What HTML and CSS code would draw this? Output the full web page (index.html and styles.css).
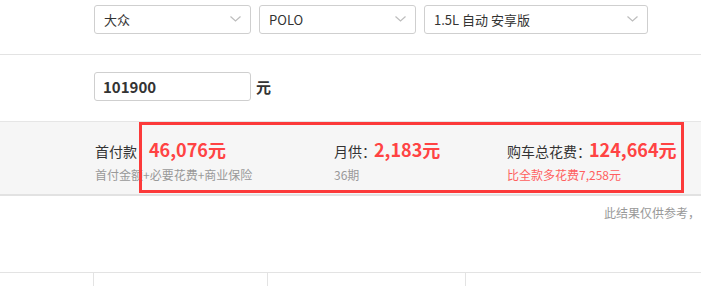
FILE: index.html
```html
<!DOCTYPE html>
<html lang="zh-CN">
<head>
    <meta charset="UTF-8">
    <meta name="viewport" content="width=device-width, initial-scale=1.0">
    <title>购车计算器</title>
    <link rel="stylesheet" href="styles.css">
</head>
<body>
    <div class="calc">
        <div class="row row-car">
            <div class="select select-brand">
                <span>大众</span>
                <svg class="arrow" width="11" height="6" viewBox="0 0 11 6"><path d="M0.5 0.5 L5.5 5 L10.5 0.5" fill="none" stroke="#bdbdbd" stroke-width="1.2"/></svg>
            </div>
            <div class="select select-model">
                <span>POLO</span>
                <svg class="arrow" width="11" height="6" viewBox="0 0 11 6"><path d="M0.5 0.5 L5.5 5 L10.5 0.5" fill="none" stroke="#bdbdbd" stroke-width="1.2"/></svg>
            </div>
            <div class="select select-trim">
                <span>1.5L 自动 安享版</span>
                <svg class="arrow" width="11" height="6" viewBox="0 0 11 6"><path d="M0.5 0.5 L5.5 5 L10.5 0.5" fill="none" stroke="#bdbdbd" stroke-width="1.2"/></svg>
            </div>
        </div>

        <div class="row row-price">
            <input class="price-input" type="text" value="101900">
            <span class="unit">元</span>
        </div>

        <div class="result">
            <div class="result-item">
                <div class="main">首付款：<b>46,076元</b></div>
                <div class="sub">首付金额+必要花费+商业保险</div>
            </div>
            <div class="result-item">
                <div class="main">月供：<b>2,183元</b></div>
                <div class="sub">36期</div>
            </div>
            <div class="result-item">
                <div class="main">购车总花费：<b>124,664元</b></div>
                <div class="sub sub-red">比全款多花费7,258元</div>
            </div>
            <div class="highlight"></div>
        </div>

        <p class="note">此结果仅供参考，</p>

        <div class="table">
            <div class="cell"></div>
            <div class="cell"></div>
            <div class="cell"></div>
            <div class="cell"></div>
        </div>
    </div>
</body>
</html>
```

FILE: styles.css
```css
* {
    margin: 0;
    padding: 0;
    box-sizing: border-box;
}

body {
    width: 701px;
    height: 286px;
    overflow: hidden;
    background: #fff;
    font-family: "Noto Sans CJK SC", "Microsoft YaHei", sans-serif;
    color: #333;
}

.row {
    display: flex;
    align-items: center;
    padding-left: 94px;
}

.row-car {
    height: 55px;
    padding-bottom: 16px;
    border-bottom: 1px solid #e3e3e3;
    gap: 8px;
}

.select {
    display: flex;
    align-items: center;
    justify-content: space-between;
    height: 29px;
    padding: 0 9px;
    border: 1px solid #cfcfcf;
    border-radius: 3px;
    font-size: 13px;
    color: #333;
}

.select-brand,
.select-model {
    width: 157px;
}

.select-trim {
    width: 224px;
}

.row-price {
    height: 66px;
    padding-top: 17px;
    align-items: flex-start;
}

.price-input {
    width: 157px;
    height: 29px;
    border: 1px solid #cfcfcf;
    border-radius: 3px;
    padding: 0 8px;
    font-family: inherit;
    font-size: 15px;
    font-weight: bold;
    color: #333;
    outline: none;
}

.unit {
    margin-left: 5px;
    font-size: 15px;
    font-weight: bold;
    line-height: 29px;
}

.result {
    position: relative;
    display: grid;
    grid-template-columns: 239px 173px auto;
    height: 75px;
    padding: 15px 0 0 95px;
    background: #f6f6f6;
    border-top: 1px solid #e6e6e6;
    border-bottom: 2px solid #e2e2e2;
}

.result-item .main {
    font-size: 14px;
    line-height: 24px;
    color: #333;
    white-space: nowrap;
}

.result-item .main b {
    margin-left: -2px;
    font-size: 18px;
    color: #ff4343;
}

.result-item .sub {
    margin-top: 4px;
    font-size: 12px;
    line-height: 16px;
    color: #999;
    white-space: nowrap;
}

.result-item .sub-red {
    color: #ff5f5f;
}

.highlight {
    position: absolute;
    left: 139px;
    top: 0;
    width: 545px;
    height: 71px;
    border: 3px solid #fc3a3a;
}

.note {
    margin-top: 9px;
    padding-left: 604px;
    font-size: 12px;
    line-height: 16px;
    color: #999;
    white-space: nowrap;
}

.table {
    display: grid;
    grid-template-columns: 93px 174px 198px auto;
    height: 14px;
    margin-top: 51px;
    border-top: 1px solid #e3e3e3;
}

.cell + .cell {
    border-left: 1px solid #e3e3e3;
}
```
